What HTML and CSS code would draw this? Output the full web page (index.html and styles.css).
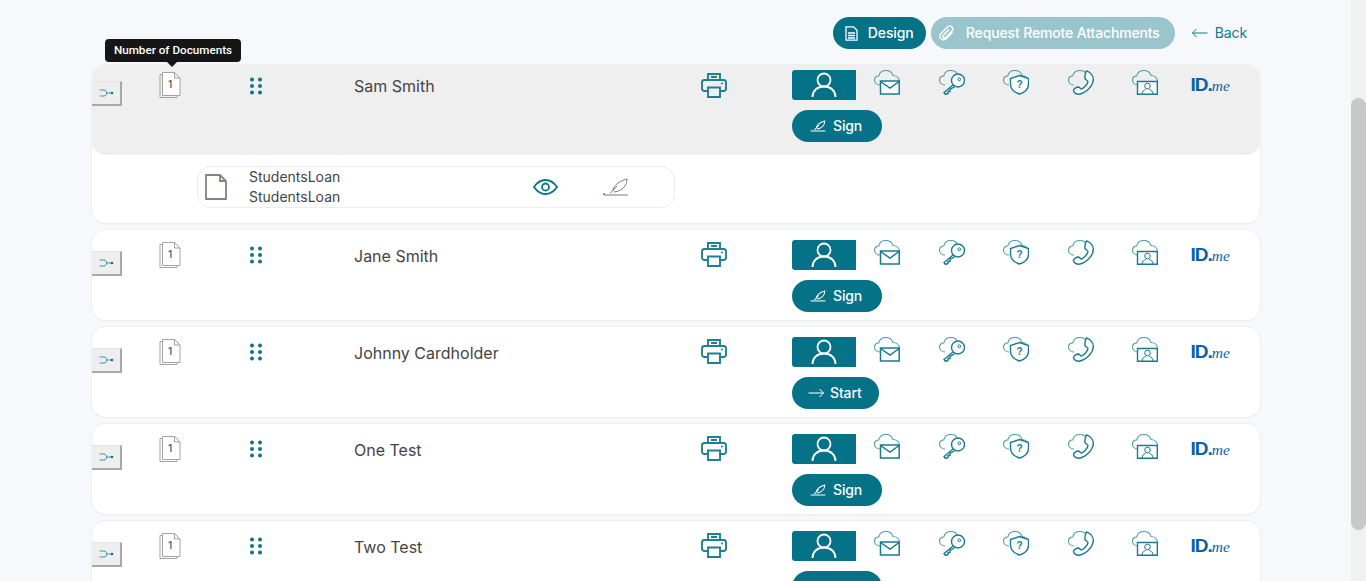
FILE: index.html

```html
<!DOCTYPE html>
<html lang="en">
<head>
  <meta charset="UTF-8">
  <title>Recipients</title>
  <link rel="stylesheet" href="styles.css">
</head>
<body>

  <svg class="defs" width="0" height="0">
    <symbol id="i-cloud" viewBox="0 0 26 25">
      <path d="M6 15C2.500 15 .5 12.500 .5 10C.5 7.500 2.500 5.800 4.800 6C5.500 2.500 8.500 .5 12 .5C15.500 .5 18 2.500 19 5.500C22 5.500 25 7.500 25.500 11" fill="none" stroke="#4f9dad" stroke-width="1.100"/>
    </symbol>
    <symbol id="i-mail" viewBox="0 0 26 25">
      <use href="#i-cloud"/>
      <path d="M6.500 11H25.200V24H6.500Z" class="knock"/>
      <path d="M6.500 11H25.200V24H6.500ZM6.500 11.500L16 18L25.200 11.500" fill="none" stroke="#1a7b8f" stroke-width="1.500"/>
    </symbol>
    <symbol id="i-key" viewBox="0 0 26 25">
      <use href="#i-cloud"/>
      <circle cx="19" cy="10.500" r="6.500" class="knock" stroke="#1a7b8f" stroke-width="1.400"/>
      <circle cx="20.300" cy="9.300" r="1.400" fill="none" stroke="#1a7b8f"/>
      <path d="M14 15L5 22.500L6.500 24.500L9 23.500V21.500H11V19.500L16 16.500" fill="none" stroke="#1a7b8f" stroke-width="1.400"/>
    </symbol>
    <symbol id="i-shield" viewBox="0 0 26 25">
      <use href="#i-cloud"/>
      <path d="M16.500 5.500L25.500 8.500V14C25.500 19 21.500 22.500 16.500 24C11.500 22.500 7.500 19 7.500 14V8.500Z" class="knock" stroke="#1a7b8f" stroke-width="1.400"/>
      <text x="16.500" y="18" text-anchor="middle" class="shield-q">?</text>
    </symbol>
    <symbol id="i-phone" viewBox="0 0 26 25">
      <use href="#i-cloud"/>
      <path d="M18.500 .8C22 2 25 5.500 25.300 9C25.300 16 18 23 11 24.300C8 24.300 5.500 22.500 5.500 20.500C5.500 19 8.500 17 10.500 17C12 17.500 12.500 19 13.500 19C16.500 18 19.500 14 20 11.500C20 10.500 17.500 10 17 8.500C16.500 7 17.500 2.500 18.500 .8Z" class="knock" stroke="#1a7b8f" stroke-width="1.400"/>
    </symbol>
    <symbol id="i-video" viewBox="0 0 26 25">
      <use href="#i-cloud"/>
      <path d="M5.500 11.500H25.300V24.300H5.500Z" class="knock" stroke="#1a7b8f" stroke-width="1.400"/>
      <circle cx="15.500" cy="16" r="2.800" fill="none" stroke="#1a7b8f"/>
      <path d="M10 24C10 21 12 20 13.800 19.500M21 24C21 21 19 20 17.200 19.500" fill="none" stroke="#1a7b8f"/>
    </symbol>
    <symbol id="i-print" viewBox="0 0 26 26">
      <path d="M7 8V2H19V8M7 19H3.500C2 19 1 18 1 16.500V10.500C1 9 2 8 3.500 8H22.500C24 8 25 9 25 10.500V16.500C25 18 24 19 22.500 19H19M7 15.500H19V25H7ZM10 5H16" fill="none" stroke="#1f7f94" stroke-width="1.900"/>
      <circle cx="21" cy="11.500" r="1" fill="#1f7f94"/>
    </symbol>
    <symbol id="i-person" viewBox="0 0 26 26">
      <circle cx="13" cy="8" r="6.500" fill="none" stroke="#fff" stroke-width="1.800"/>
      <path d="M1.500 25C1.500 19 6 14.500 13 14.500C20 14.500 24.500 19 24.500 25" fill="none" stroke="#fff" stroke-width="1.800"/>
    </symbol>
    <symbol id="i-pen" viewBox="0 0 26 18">
      <path d="M1 17H25" stroke="currentColor"/>
      <path d="M7 15.500L14 8M10 13C10 8 16 3 24 1C24 7 20 13 11 14" fill="none" stroke="currentColor"/>
    </symbol>
    <symbol id="i-stack" viewBox="0 0 22 26">
      <path d="M3 2.500H1V25.500H18V23.500" fill="none" stroke="#a3a3a3"/>
      <path d="M3.500 .5H15.500L21 6V23.500H3.500ZM15.500 .5V6H21" class="knock" stroke="#a3a3a3"/>
    </symbol>
    <symbol id="i-dots" viewBox="0 0 12 18">
      <circle cx="2" cy="2.500" r="2" fill="#0f7488"/><circle cx="10" cy="2.500" r="2" fill="#0f7488"/>
      <circle cx="2" cy="9" r="2" fill="#0f7488"/><circle cx="10" cy="9" r="2" fill="#0f7488"/>
      <circle cx="2" cy="15.500" r="2" fill="#0f7488"/><circle cx="10" cy="15.500" r="2" fill="#0f7488"/>
    </symbol>
    <symbol id="i-toggle" viewBox="0 0 15 8">
      <path d="M.5 1H5C8.500 1 8.500 7 5 7H.5M8 4H12" fill="none" stroke="#3d97ad" stroke-width="1"/>
      <circle cx="13" cy="4" r="1.300" fill="#0f7488"/>
    </symbol>
    <symbol id="i-arrow" viewBox="0 0 16 10">
      <path d="M.5 5H15.500M11.500 1L15.500 5L11.500 9" fill="none" stroke="currentColor" stroke-width="1"/>
    </symbol>
    <symbol id="i-arrow-left" viewBox="0 0 16 10">
      <path d="M15.500 5H.5M4.500 1L.5 5L4.500 9" fill="none" stroke="currentColor" stroke-width="1"/>
    </symbol>
  </svg>

  <div class="screen">
    <main class="page">

      <div class="toolbar">
        <button class="pill">
          <svg width="13" height="15" viewBox="0 0 13 15"><path d="M1 .8H8.500L12 4.300V14.200H1ZM3 7H10M3 9.500H10M3 12H10" fill="none" stroke="#fff" stroke-width="1.300"/></svg>
          Design
        </button>
        <button class="pill pill-off">
          <svg width="15" height="16" viewBox="0 0 15 16"><path d="M13.500 7L7.500 13.500C5.500 15.500 2.500 15 1.500 13.500C.5 12 .5 10 2 8.500L8.500 2C10 .5 12 1 13 2C14 3 14 5 12.500 6.500L6.500 12.500C5.500 13.500 4.500 13 4 12.500C3.500 12 3.500 11 4.500 10L10 4.500" fill="none" stroke="#fff" stroke-width="1.300"/></svg>
          Request Remote Attachments
        </button>
        <a class="back"><svg class="back-arrow" width="16" height="10"><use href="#i-arrow-left"/></svg>Back</a>
      </div>

      <div class="rows">

        <section class="card card-open">
          <div class="row">
            <button class="toggle"><svg width="15" height="8"><use href="#i-toggle"/></svg></button>
            <div class="count"><svg width="22" height="26"><use href="#i-stack"/></svg><span class="count-num">1</span></div>
            <svg class="dots" width="12" height="18"><use href="#i-dots"/></svg>
            <div class="name">Sam Smith</div>
            <svg class="print" width="26" height="26"><use href="#i-print"/></svg>
            <div class="auth">
              <div class="methods">
                <span class="person"><svg width="26" height="26"><use href="#i-person"/></svg></span>
                <svg class="cloud"><use href="#i-mail"/></svg>
                <svg class="cloud"><use href="#i-key"/></svg>
                <svg class="cloud"><use href="#i-shield"/></svg>
                <svg class="cloud"><use href="#i-phone"/></svg>
                <svg class="cloud"><use href="#i-video"/></svg>
                <span class="idme"><b>ID.</b><i>me</i></span>
              </div>
              <button class="act"><svg class="act-pen" width="16" height="12"><use href="#i-pen"/></svg>Sign</button>
            </div>
          </div>
          <div class="doc">
            <svg width="22" height="26" viewBox="0 0 22 26"><path d="M1 1H15L21 7V25H1ZM15 1V7H21" fill="none" stroke="#8b8178" stroke-width="1.800"/></svg>
            <div class="doc-name">StudentsLoan<br>StudentsLoan</div>
            <svg class="doc-eye" width="25" height="16" viewBox="0 0 25 16"><path d="M1 8C4 3.500 8 1 12.500 1C17 1 21 3.500 24 8C21 12.500 17 15 12.500 15C8 15 4 12.500 1 8Z" fill="none" stroke="#0f7488" stroke-width="1.800"/><circle cx="12.500" cy="8" r="3.500" fill="none" stroke="#0f7488" stroke-width="1.800"/></svg>
            <svg class="doc-pen" width="26" height="18"><use href="#i-pen"/><circle cx="1" cy="16" r="1" fill="#3d97ad"/></svg>
          </div>
        </section>

        <section class="card">
          <div class="row">
            <button class="toggle"><svg width="15" height="8"><use href="#i-toggle"/></svg></button>
            <div class="count"><svg width="22" height="26"><use href="#i-stack"/></svg><span class="count-num">1</span></div>
            <svg class="dots" width="12" height="18"><use href="#i-dots"/></svg>
            <div class="name">Jane Smith</div>
            <svg class="print" width="26" height="26"><use href="#i-print"/></svg>
            <div class="auth">
              <div class="methods">
                <span class="person"><svg width="26" height="26"><use href="#i-person"/></svg></span>
                <svg class="cloud"><use href="#i-mail"/></svg>
                <svg class="cloud"><use href="#i-key"/></svg>
                <svg class="cloud"><use href="#i-shield"/></svg>
                <svg class="cloud"><use href="#i-phone"/></svg>
                <svg class="cloud"><use href="#i-video"/></svg>
                <span class="idme"><b>ID.</b><i>me</i></span>
              </div>
              <button class="act"><svg class="act-pen" width="16" height="12"><use href="#i-pen"/></svg>Sign</button>
            </div>
          </div>
        </section>

        <section class="card">
          <div class="row">
            <button class="toggle"><svg width="15" height="8"><use href="#i-toggle"/></svg></button>
            <div class="count"><svg width="22" height="26"><use href="#i-stack"/></svg><span class="count-num">1</span></div>
            <svg class="dots" width="12" height="18"><use href="#i-dots"/></svg>
            <div class="name">Johnny Cardholder</div>
            <svg class="print" width="26" height="26"><use href="#i-print"/></svg>
            <div class="auth">
              <div class="methods">
                <span class="person"><svg width="26" height="26"><use href="#i-person"/></svg></span>
                <svg class="cloud"><use href="#i-mail"/></svg>
                <svg class="cloud"><use href="#i-key"/></svg>
                <svg class="cloud"><use href="#i-shield"/></svg>
                <svg class="cloud"><use href="#i-phone"/></svg>
                <svg class="cloud"><use href="#i-video"/></svg>
                <span class="idme"><b>ID.</b><i>me</i></span>
              </div>
              <button class="act act-start"><svg width="16" height="10"><use href="#i-arrow"/></svg>Start</button>
            </div>
          </div>
        </section>

        <section class="card">
          <div class="row">
            <button class="toggle"><svg width="15" height="8"><use href="#i-toggle"/></svg></button>
            <div class="count"><svg width="22" height="26"><use href="#i-stack"/></svg><span class="count-num">1</span></div>
            <svg class="dots" width="12" height="18"><use href="#i-dots"/></svg>
            <div class="name">One Test</div>
            <svg class="print" width="26" height="26"><use href="#i-print"/></svg>
            <div class="auth">
              <div class="methods">
                <span class="person"><svg width="26" height="26"><use href="#i-person"/></svg></span>
                <svg class="cloud"><use href="#i-mail"/></svg>
                <svg class="cloud"><use href="#i-key"/></svg>
                <svg class="cloud"><use href="#i-shield"/></svg>
                <svg class="cloud"><use href="#i-phone"/></svg>
                <svg class="cloud"><use href="#i-video"/></svg>
                <span class="idme"><b>ID.</b><i>me</i></span>
              </div>
              <button class="act"><svg class="act-pen" width="16" height="12"><use href="#i-pen"/></svg>Sign</button>
            </div>
          </div>
        </section>

        <section class="card">
          <div class="row">
            <button class="toggle"><svg width="15" height="8"><use href="#i-toggle"/></svg></button>
            <div class="count"><svg width="22" height="26"><use href="#i-stack"/></svg><span class="count-num">1</span></div>
            <svg class="dots" width="12" height="18"><use href="#i-dots"/></svg>
            <div class="name">Two Test</div>
            <svg class="print" width="26" height="26"><use href="#i-print"/></svg>
            <div class="auth">
              <div class="methods">
                <span class="person"><svg width="26" height="26"><use href="#i-person"/></svg></span>
                <svg class="cloud"><use href="#i-mail"/></svg>
                <svg class="cloud"><use href="#i-key"/></svg>
                <svg class="cloud"><use href="#i-shield"/></svg>
                <svg class="cloud"><use href="#i-phone"/></svg>
                <svg class="cloud"><use href="#i-video"/></svg>
                <span class="idme"><b>ID.</b><i>me</i></span>
              </div>
              <button class="act"><svg class="act-pen" width="16" height="12"><use href="#i-pen"/></svg>Sign</button>
            </div>
          </div>
        </section>

      </div>

      <div class="tip">Number of Documents</div>
    </main>

    <div class="scrollbar"><div class="thumb"></div></div>
  </div>

</body>
</html>
```

FILE: styles.css

```css
* { box-sizing: border-box; }
html, body { margin: 0; height: 100%; overflow: hidden; }
body {
  font-family: "Inter", "Liberation Sans", sans-serif;
  color: #444;
  background: #f6f8fb;
}
.defs { position: absolute; }
button { font-family: inherit; border: 0; cursor: pointer; }

.screen { display: flex; height: 581px; }
.page {
  position: relative;
  flex: 1;
  min-width: 0;
  height: 581px;
  overflow: hidden;
  padding: 17px 91px 0 92px;
}

.scrollbar { width: 15px; background: #f1f1f1; padding-top: 98px; }
.thumb { height: 432px; background: #c8c8c8; border-radius: 8px; }

.toolbar {
  display: flex;
  justify-content: flex-end;
  align-items: center;
  gap: 5px;
  height: 32px;
  padding-right: 13px;
  margin-bottom: 16px;
}
.pill {
  display: flex;
  align-items: center;
  gap: 10px;
  width: 93px;
  height: 32px;
  padding: 0 0 2px 12px;
  border-radius: 16px;
  background: #057287;
  color: #fff;
  font-size: 14px;
  font-weight: 500;
  letter-spacing: -.01em;
}
.pill svg { flex: none; margin-top: 2px; }
.pill-off { width: 244px; gap: 12px; padding-left: 8px; background: #9bc5cd; white-space: nowrap; }
.back {
  display: flex;
  align-items: center;
  margin-left: 12px;
  padding-bottom: 1px;
  color: #0f7a90;
  font-size: 14px;
  letter-spacing: -.01em;
}
.back-arrow { margin-right: 7px; }

.rows { display: flex; flex-direction: column; gap: 7px; }
.card {
  background: #fff;
  border-radius: 14px;
  box-shadow: 0 0 0 1px #eceef1, 0 1px 1px #e2e4e8;
  overflow: hidden;
}
.row {
  display: grid;
  grid-template-columns: 67px 90px 105px 347px 91px 1fr;
  align-items: start;
  height: 90px;
  padding-top: 10px;
}
.card-open { height: 158px; }
.card-open .row { background: #efefef; padding-top: 5px; border-radius: 14px; }
.card-open .print { margin-top: 2px; }
.card-open .dots { margin-top: 7px; }

.toggle {
  display: flex;
  align-items: center;
  justify-content: center;
  width: 30px;
  height: 25px;
  margin-top: 11px;
  padding: 0;
  background: #eee;
  border-right: 2px solid #a8a8a8;
  border-bottom: 2px solid #a8a8a8;
  border-top: 1px solid #e4e4e4;
}
.count { position: relative; width: 22px; height: 26px; margin-top: 2px; }
.count svg { display: block; }
.count-num {
  position: absolute;
  left: 9px;
  top: 6px;
  font-size: 10px;
  font-weight: 600;
  color: #666;
}
.dots { margin: 6px 0 0 1px; }
.name { font-size: 16px; line-height: 20px; margin-top: 6px; }
.print { margin-top: 1px; }

.auth { display: flex; flex-direction: column; align-items: flex-start; gap: 10px; }
.methods { display: flex; align-items: flex-start; height: 30px; }
.person {
  display: flex;
  align-items: center;
  justify-content: center;
  flex: none;
  width: 64px;
  height: 30px;
  margin-right: 18px;
  background: #057287;
  border-radius: 3px 0 0 3px;
}
.cloud { flex: none; width: 26px; height: 25px; margin-right: 38.5px; }
.idme {
  flex: none;
  margin: 5px 0 0 -6px;
  color: #0b5fa8;
  font: 19px/19px "Liberation Sans", sans-serif;
  letter-spacing: -1px;
}
.idme b { font-weight: 700; }
.idme i { font: italic 15.5px "Liberation Serif", serif; letter-spacing: 0; }
.shield-q { font: 700 10px "Liberation Sans", sans-serif; fill: #1a7b8f; }
.knock { fill: #fff; }
.card-open .row .knock { fill: #efefef; }

.act {
  display: flex;
  align-items: center;
  gap: 7px;
  height: 32px;
  padding: 0 20px 2px 18px;
  border-radius: 16px;
  background: #057287;
  color: #fff;
  font-size: 14px;
  font-weight: 500;
  letter-spacing: -.01em;
}
.act svg { flex: none; margin-top: 2px; }
.act-pen { color: #fff; stroke-width: 1.700; }
.act-start { padding: 0 17px 2px 16px; gap: 6px; }

.doc {
  display: flex;
  align-items: center;
  width: 478px;
  height: 42px;
  margin: 11px 0 15px 105px;
  padding-left: 7px;
  border: 1px solid #ececec;
  border-radius: 14px;
}
.doc-name { width: 284px; margin-left: 22px; font-size: 14px; line-height: 20px; color: #444; }
.doc-eye { margin-right: 45px; }
.doc-pen { color: #7d7d7d; stroke-width: 1; }

/* sits over the first row, it is a hover tooltip */
.tip {
  position: absolute;
  left: 105px;
  top: 39px;
  width: 136px;
  height: 23px;
  background: #161616;
  border-radius: 4px;
  color: #fff;
  font: 500 11.7px/23px "Roboto", sans-serif;
  text-align: center;
}
.tip::after {
  content: "";
  position: absolute;
  left: 62px;
  top: 23px;
  border: 5px solid transparent;
  border-top-color: #161616;
  border-bottom: 0;
}
```
